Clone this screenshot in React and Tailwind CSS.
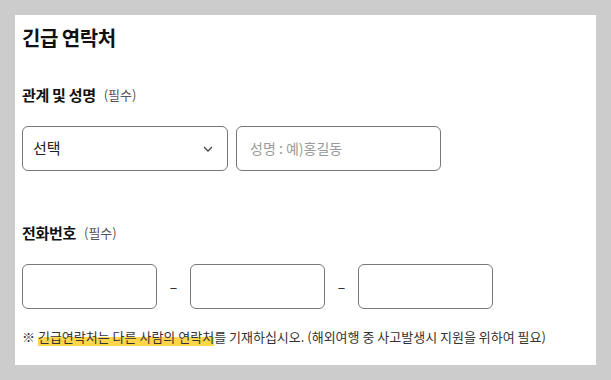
import React from "react";

const font = { fontFamily: '"Noto Sans CJK KR", "Noto Sans", sans-serif' };

const Label = ({ children }) => (
  <div className="flex items-center h-[20px] gap-[8px]">
    <span className="text-[15px] font-bold text-[#111] tracking-[-0.3px]">{children}</span>
    <span className="text-[13px] text-[#555]">(필수)</span>
  </div>
);

const Box = ({ className = "", children }) => (
  <div className={"h-[45px] border border-[#777] rounded-[6px] bg-white flex items-center " + className}>
    {children}
  </div>
);

export default function App() {
  return (
    <div className="w-[611px] h-[380px] bg-[#cccccc] p-[15px]" style={font}>
      <div className="bg-white h-[350px] pl-[7px] pt-[9px]">
        <h1 className="text-[20px] leading-[28px] font-bold text-[#111] tracking-[-0.5px]">긴급 연락처</h1>

        <div className="mt-[33px]">
          <Label>관계 및 성명</Label>
        </div>
        <div className="flex gap-[8px] mt-[21px]">
          <Box className="w-[206px] justify-between pl-[10px] pr-[14px]">
            <span className="text-[15px] text-[#222]">선택</span>
            <svg width="10" height="6" viewBox="0 0 10 6" fill="none">
              <path d="M1 1l4 4 4-4" stroke="#444" strokeWidth="1.3" />
            </svg>
          </Box>
          <Box className="w-[205px] px-[13px]">
            <span className="text-[14px] text-[#9a9a9a]">성명 : 예)홍길동</span>
          </Box>
        </div>

        <div className="mt-[52px]">
          <Label>전화번호</Label>
        </div>
        <div className="flex items-center mt-[21px]">
          <Box className="w-[135px]" />
          <span className="w-[33px] text-center text-[14px] text-[#222]">–</span>
          <Box className="w-[135px]" />
          <span className="w-[33px] text-center text-[14px] text-[#222]">–</span>
          <Box className="w-[135px]" />
        </div>

        <p className="mt-[18px] text-[13px] leading-[20px] text-[#333]">
          ※{" "}
          <span className="bg-[linear-gradient(transparent_50%,#ffd54a_50%)]">긴급연락처는 다른 사람의 연락처</span>
          를 기재하십시오. (해외여행 중 사고발생시 지원을 위하여 필요)
        </p>
      </div>
    </div>
  );
}
